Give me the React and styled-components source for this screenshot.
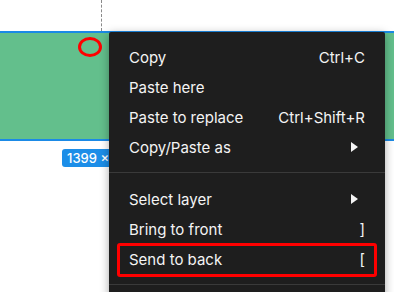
import React from 'react';
import styled, { createGlobalStyle } from 'styled-components';

const GlobalStyle = createGlobalStyle`
  body {
    margin: 0;
    background: #fff;
    font-family: Inter, "Noto Sans", sans-serif;
  }
`;

const Canvas = styled.div`
  position: relative;
  width: 394px;
  height: 292px;
  overflow: hidden;
  background: #fff;
`;

const Guide = styled.div`
  height: 31px;
  margin-left: 101px;
  border-left: 1px dashed #8a8a8a;
`;

const Frame = styled.div`
  height: 106px;
  background: #63bf8c;
  border-top: 2px solid #1b8ae6;
  border-bottom: 2px solid #1b8ae6;
`;

const Badge = styled.div`
  display: inline-flex;
  align-items: center;
  height: 18px;
  margin: 8px 0 0 62px;
  padding: 0 5px;
  border-radius: 3px;
  background: #1c8ee8;
  color: #fff;
  font-size: 13px;
  font-weight: 500;
`;

const Menu = styled.div`
  position: absolute;
  left: 109px;
  top: 32px;
  width: 276px;
  height: 280px;
  padding-top: 10px;
  box-sizing: border-box;
  background: #1e1e1e;
  border-radius: 2px;
  box-shadow: 0 2px 10px rgba(0, 0, 0, 0.35);
`;

const Row = styled.div`
  display: flex;
  align-items: center;
  justify-content: space-between;
  height: 30px;
  padding: 0 20px;
  color: #f4f4f4;
  font-size: 15px;
`;

const Shortcut = styled.span`
  color: #f4f4f4;
`;

const Arrow = styled.span`
  width: 0;
  height: 0;
  margin-right: 7px;
  border-top: 5px solid transparent;
  border-bottom: 5px solid transparent;
  border-left: 7px solid #f4f4f4;
`;

const Divider = styled.div`
  height: 1px;
  margin: 10px 0 11px;
  background: #3a3a3a;
`;

const Ring = styled.div`
  position: absolute;
  left: 78px;
  top: 37px;
  width: 18px;
  height: 14px;
  border: 3px solid #ff0000;
  border-radius: 50%;
`;

const Highlight = styled.div`
  position: absolute;
  left: 117px;
  top: 243px;
  width: 254px;
  height: 28px;
  border: 3px solid #ff0000;
  border-radius: 3px;
`;

const items = [
  { label: 'Copy', shortcut: 'Ctrl+C' },
  { label: 'Paste here' },
  { label: 'Paste to replace', shortcut: 'Ctrl+Shift+R' },
  { label: 'Copy/Paste as', submenu: true },
  null,
  { label: 'Select layer', submenu: true },
  { label: 'Bring to front', shortcut: ']' },
  { label: 'Send to back', shortcut: '[' },
  null,
];

export default function App() {
  return (
    <>
      <GlobalStyle />
      <Canvas>
        <Guide />
        <Frame />
        <Badge>1399 × 108</Badge>
        <Ring />
        <Menu>
          {items.map((item, i) =>
            item ? (
              <Row key={i}>
                <span>{item.label}</span>
                {item.shortcut && <Shortcut>{item.shortcut}</Shortcut>}
                {item.submenu && <Arrow />}
              </Row>
            ) : (
              <Divider key={i} />
            )
          )}
        </Menu>
        <Highlight />
      </Canvas>
    </>
  );
}
